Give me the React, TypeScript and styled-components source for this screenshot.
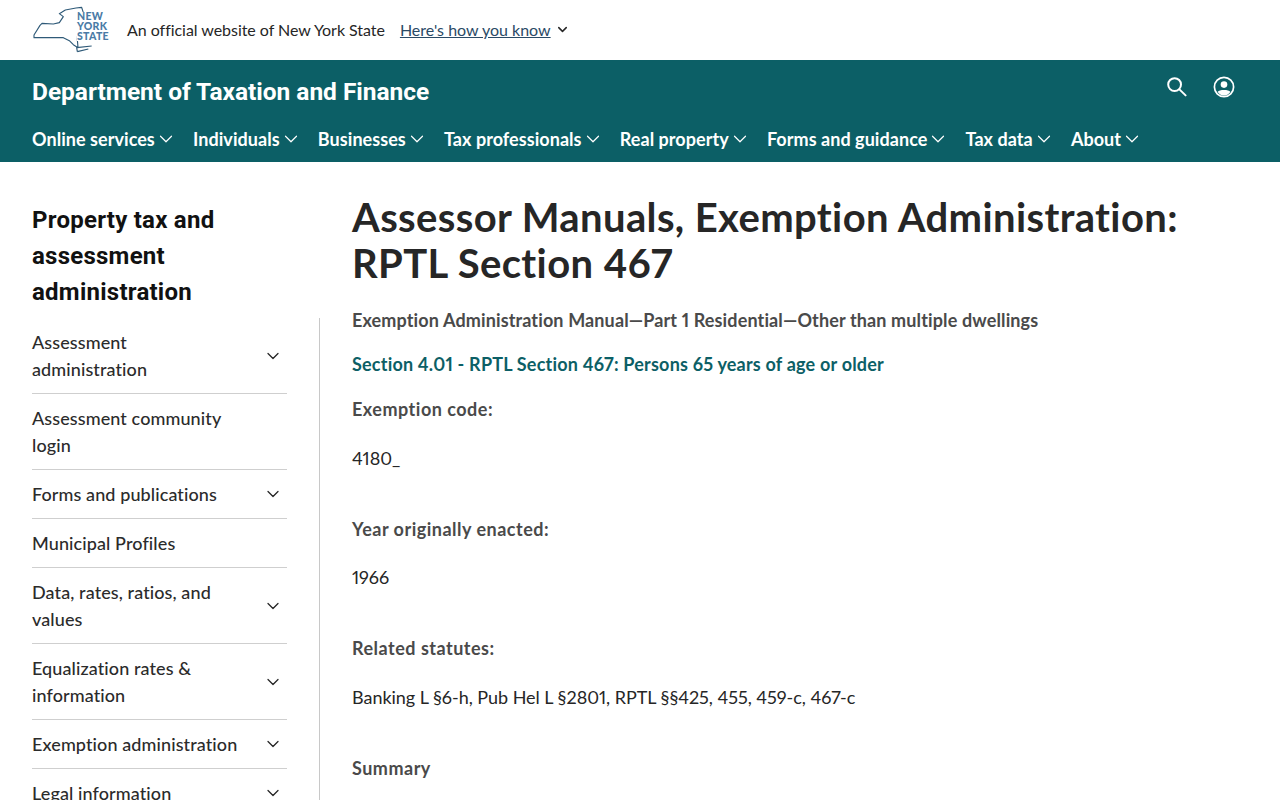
import React from 'react'
import styled, { createGlobalStyle } from 'styled-components'
import { ChevronDown } from 'lucide-react'

const GlobalStyle = createGlobalStyle`
  html, body {
    margin: 0;
    height: 800px;
    overflow: hidden;
    background: #fff;
    font-family: 'Lato', 'Liberation Sans', sans-serif;
    font-variant-ligatures: none;
    font-variant-numeric: proportional-nums;
  }
  * { box-sizing: border-box; }
`

const Banner = styled.div`
  height: 60px;
  padding: 0 0 2px 32px;
  display: flex;
  align-items: center;
  background: #fff;
`
const LogoWrap = styled.div`
  position: relative;
  width: 78px;
  height: 60px;
  margin: 2px 17px 0 0;
`
const LogoWords = styled.div`
  position: absolute;
  left: 45px;
  top: 12px;
  font: 900 10.5px/9.8px 'Lato', sans-serif;
  letter-spacing: 0.3px;
  color: #4a7ba6;
  background: #fff;
`
const BannerText = styled.span`
  font-size: 16px;
  color: #262626;
  margin-right: 15px;
  letter-spacing: -0.04px;
`
const KnowLink = styled.a`
  font-size: 16px;
  color: #2a4a66;
  text-decoration: underline;
  margin-right: 4px;
`
const Masthead = styled.header`
  height: 102px;
  background: #0c5f66;
  color: #fff;
  padding: 0 32px;
  display: flex;
  flex-direction: column;
`
const MastTop = styled.div`
  height: 65px;
  display: flex;
  justify-content: space-between;
  align-items: flex-start;
`
const Title = styled.div`
  margin-top: 15px;
  font: 700 24.5px/33px 'Roboto', sans-serif;
  letter-spacing: -0.03px;
`
const MastIcons = styled.div`
  display: flex;
  align-items: center;
  gap: 25px;
  padding: 16px 13px 0 0;
`
const Nav = styled.nav`
  display: flex;
  gap: 21.7px;
`
const NavItem = styled.a`
  display: flex;
  align-items: center;
  font-size: 18px;
  font-weight: 700;
  line-height: 28px;
  color: #fff;
  letter-spacing: 0.05px;
  svg { margin-right: -5.5px; }
`
const Page = styled.div`
  display: flex;
  padding: 32px 32px 0;
`
const Sidebar = styled.aside`
  width: 288px;
  flex: none;
`
const SideTitle = styled.h2`
  margin: 8px 0 0;
  width: 220px;
  font: 700 24px/36px 'Roboto', sans-serif;
  letter-spacing: 0.25px;
  color: #111;
`
const SideList = styled.div`
  margin-top: 8px;
  border-right: 1px solid #c8c8c8;
  padding-right: 32px;
`
const SideRow = styled.div`
  display: flex;
  justify-content: space-between;
  align-items: center;
  padding: 10.5px 4px 10.5px 0;
  border-bottom: 1px solid #cfcfcf;
  &:last-child { border-bottom: none; }
  svg { flex: none; }
`
const SideLabel = styled.span`
  width: 210px;
  font-size: 18px;
  font-weight: 500;
  line-height: 27px;
  color: #2b2b2b;
  letter-spacing: 0.1px;
`
const Main = styled.main`
  flex: 1;
  padding-left: 32px;
`
const Heading = styled.h1`
  margin: 0;
  font-size: 40px;
  font-weight: 700;
  line-height: 46px;
  color: #262626;
  letter-spacing: 0.38px;
`
const SubHead = styled.div<{ $teal?: boolean; $gap: number }>`
  margin-top: ${p => p.$gap}px;
  font-size: 18px;
  font-weight: 700;
  line-height: 27px;
  letter-spacing: ${p => (p.$teal ? 0.2 : 0.13)}px;
  color: ${p => (p.$teal ? '#0c5f66' : '#4a4a4a')};
`
const FieldLabel = styled(SubHead)`
  letter-spacing: 0.5px;
`
const Body = styled.p`
  margin: 21.67px 0 0;
  font-size: 18px;
  line-height: 27px;
  color: #262626;
  letter-spacing: -0.03px;
`

const Chevron: React.FC = () => <ChevronDown size={22} strokeWidth={1.3} />

const NyLogo: React.FC = () => (
  <svg width="78" height="60" viewBox="36 0 234 180" fill="none" stroke="#2f5a78" strokeWidth="3.4" strokeLinejoin="round">
    <path d="M42 105 L60 76 L66 70 L100 72 L118 68 L130 50 L118 41 L136 30 L168 24 L185 22 L190 38 L175 62 L172 118 L174 143 L160 134 L148 122 L130 113 L42 113 Z" />
    <path d="M172 155 L170 143 L215 138 M172 155 L205 147" />
  </svg>
)

const SearchGlyph: React.FC = () => (
  <svg width="22" height="22" viewBox="0 0 22 22" fill="none" stroke="#fff" strokeWidth="2" strokeLinecap="round">
    <circle cx="8.6" cy="8.6" r="6.4" />
    <path d="M13.4 13.4 L19.6 19.4" />
  </svg>
)

const UserCircle: React.FC = () => (
  <svg width="22" height="22" viewBox="0 0 22 22">
    <circle cx="11" cy="11" r="9.6" fill="none" stroke="#fff" strokeWidth="1.7" />
    <circle cx="11" cy="8.6" r="3.3" fill="#fff" />
    <path d="M4.6 16 C6.2 13.4 15.8 13.4 17.4 16 C15.6 18.4 13.4 19.6 11 19.6 C8.6 19.6 6.4 18.4 4.6 16 Z" fill="#fff" />
  </svg>
)

const navItems = ['Online services', 'Individuals', 'Businesses', 'Tax professionals', 'Real property', 'Forms and guidance', 'Tax data', 'About']

const sideItems: { label: string; more: boolean }[] = [
  { label: 'Assessment administration', more: true },
  { label: 'Assessment community login', more: false },
  { label: 'Forms and publications', more: true },
  { label: 'Municipal Profiles', more: false },
  { label: 'Data, rates, ratios, and values', more: true },
  { label: 'Equalization rates & information', more: true },
  { label: 'Exemption administration', more: true },
  { label: 'Legal information', more: true },
]

export default function App() {
  return (
    <>
      <GlobalStyle />
      <Banner>
        <LogoWrap>
          <NyLogo />
          <LogoWords>NEW<br />YORK<br />STATE</LogoWords>
        </LogoWrap>
        <BannerText>An official website of New York State</BannerText>
        <KnowLink>Here's how you know</KnowLink>
        <ChevronDown size={15} strokeWidth={2.4} color="#262626" />
      </Banner>
      <Masthead>
        <MastTop>
          <Title>Department of Taxation and Finance</Title>
          <MastIcons>
            <SearchGlyph />
            <UserCircle />
          </MastIcons>
        </MastTop>
        <Nav>
          {navItems.map(n => (
            <NavItem key={n}>{n}<Chevron /></NavItem>
          ))}
        </Nav>
      </Masthead>
      <Page>
        <Sidebar>
          <SideTitle>Property tax and assessment administration</SideTitle>
          <SideList>
            {sideItems.map(s => (
              <SideRow key={s.label}>
                <SideLabel>{s.label}</SideLabel>
                {s.more && <ChevronDown size={20} strokeWidth={1.5} color="#262626" />}
              </SideRow>
            ))}
          </SideList>
        </Sidebar>
        <Main>
          <Heading>Assessor Manuals, Exemption Administration: RPTL Section 467</Heading>
          <SubHead $gap={21}>Exemption Administration Manual—Part 1 Residential—Other than multiple dwellings</SubHead>
          <SubHead $gap={17} $teal>Section 4.01 - RPTL Section 467: Persons 65 years of age or older</SubHead>
          <FieldLabel $gap={18}>Exemption code:</FieldLabel>
          <Body>4180_</Body>
          <FieldLabel $gap={44}>Year originally enacted:</FieldLabel>
          <Body>1966</Body>
          <FieldLabel $gap={44}>Related statutes:</FieldLabel>
          <Body>Banking L §6-h, Pub Hel L §2801, RPTL §§425, 455, 459-c, 467-c</Body>
          <FieldLabel $gap={44}>Summary</FieldLabel>
        </Main>
      </Page>
    </>
  )
}
